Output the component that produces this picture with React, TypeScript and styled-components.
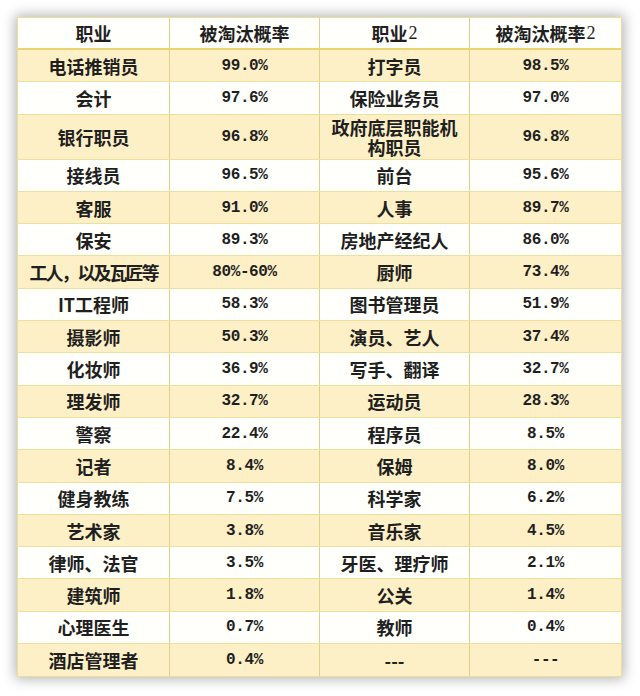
import { FC } from 'react'
import styled, { createGlobalStyle } from 'styled-components'

const GlobalStyle = createGlobalStyle`
  html, body {
    margin: 0;
    padding: 0;
    background: #fff;
  }
`

const Page = styled.div`
  width: 640px;
  height: 696px;
  padding: 17px 0 0 17px;
  box-sizing: border-box;
  background: #fff;
`

const Sheet = styled.div`
  width: 605px;
  box-sizing: border-box;
  border: 1px solid #eadf9c;
  background: #fffffc;
  box-shadow: 0 0 12px 2px rgba(0, 0, 0, 0.3);
  font-family: 'Noto Sans CJK SC', 'Noto Sans', sans-serif;
  color: #1f1f1f;
`

const Row = styled.div<{ $alt?: boolean; $tall?: boolean; $head?: boolean }>`
  display: grid;
  grid-template-columns: 152px 150px 150px 151px;
  box-sizing: border-box;
  height: ${({ $tall, $head }) => ($tall ? '45px' : $head ? '32px' : '32.3px')};
  background: ${({ $alt }) => ($alt ? '#fdf0c6' : '#fffffc')};
  border-bottom: ${({ $head }) =>
    $head ? '2px solid #e9d46f' : '1px solid #ebe09e'};

  &:last-child {
    border-bottom: none;
  }
`

const Cell = styled.div<{ $mono?: boolean; $head?: boolean; $tight?: boolean }>`
  display: flex;
  align-items: center;
  justify-content: center;
  text-align: center;
  box-sizing: border-box;
  padding: ${({ $tight }) => ($tight ? '0' : '0 4px')};
  white-space: ${({ $tight }) => ($tight ? 'nowrap' : 'normal')};
  border-right: 1px solid #ddd08a;
  font-size: ${({ $mono }) => ($mono ? '16px' : '18px')};
  font-weight: ${({ $head }) => ($head ? 600 : 700)};
  line-height: 20px;
  font-family: ${({ $mono }) =>
    $mono
      ? "'Liberation Mono', 'DejaVu Sans Mono', monospace"
      : "'Noto Sans CJK SC', 'Noto Sans', sans-serif"};
  letter-spacing: ${({ $mono, $tight }) =>
    $mono ? '-0.4px' : $tight ? '-2px' : '0'};

  &:last-child {
    border-right: none;
  }
`

const Digit = styled.span`
  font-family: 'Liberation Serif', serif;
  font-weight: 400;
  margin-left: 1px;
`

type Entry = [string, string, string, string]

const data: Entry[] = [
  ['电话推销员', '99.0%', '打字员', '98.5%'],
  ['会计', '97.6%', '保险业务员', '97.0%'],
  ['银行职员', '96.8%', '政府底层职能机构职员', '96.8%'],
  ['接线员', '96.5%', '前台', '95.6%'],
  ['客服', '91.0%', '人事', '89.7%'],
  ['保安', '89.3%', '房地产经纪人', '86.0%'],
  ['工人，以及瓦匠等', '80%-60%', '厨师', '73.4%'],
  ['IT工程师', '58.3%', '图书管理员', '51.9%'],
  ['摄影师', '50.3%', '演员、艺人', '37.4%'],
  ['化妆师', '36.9%', '写手、翻译', '32.7%'],
  ['理发师', '32.7%', '运动员', '28.3%'],
  ['警察', '22.4%', '程序员', '8.5%'],
  ['记者', '8.4%', '保姆', '8.0%'],
  ['健身教练', '7.5%', '科学家', '6.2%'],
  ['艺术家', '3.8%', '音乐家', '4.5%'],
  ['律师、法官', '3.5%', '牙医、理疗师', '2.1%'],
  ['建筑师', '1.8%', '公关', '1.4%'],
  ['心理医生', '0.7%', '教师', '0.4%'],
  ['酒店管理者', '0.4%', '---', '---'],
]

const Header: FC = () => (
  <Row $head>
    <Cell $head>职业</Cell>
    <Cell $head>被淘汰概率</Cell>
    <Cell $head>
      职业<Digit>2</Digit>
    </Cell>
    <Cell $head>
      被淘汰概率<Digit>2</Digit>
    </Cell>
  </Row>
)

export default function App() {
  return (
    <Page>
      <GlobalStyle />
      <Sheet>
        <Header />
        {data.map(([job, rate, job2, rate2], i) => (
          <Row key={job} $alt={i % 2 === 0} $tall={job2.length > 7}>
            <Cell $tight={job.length > 6}>{job}</Cell>
            <Cell $mono>{rate}</Cell>
            <Cell>{job2}</Cell>
            <Cell $mono>{rate2}</Cell>
          </Row>
        ))}
      </Sheet>
    </Page>
  )
}
